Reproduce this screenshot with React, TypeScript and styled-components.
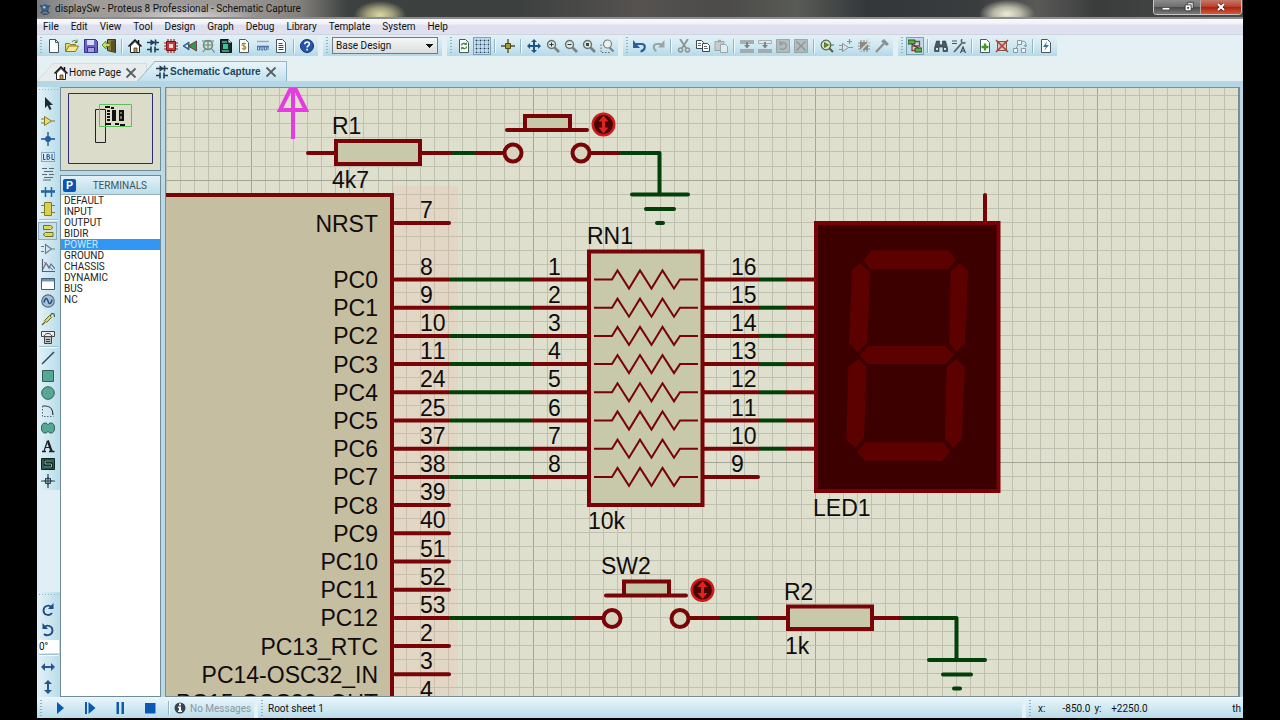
import React, { ReactNode } from 'react';
import styled, { createGlobalStyle, css } from 'styled-components';

const Global = createGlobalStyle`
  * { box-sizing: border-box; }
  body { margin: 0; background: #000; font-family: Roboto, "Liberation Sans", sans-serif; font-size: 10px; color: #111; }
  button, input, select { font: inherit; color: inherit; margin: 0; padding: 0; border: 0; background: none; }
  ul { margin: 0; padding: 0; list-style: none; }
`;

/* ---------- window frame ---------- */

const Desktop = styled.div`
  display: flex;
  flex-direction: column;
  height: 100vh;
  padding: 0 37px 2px;
  background: #000;
`;

const AppWindow = styled.div`
  flex: 1;
  min-height: 0;
  display: flex;
  flex-direction: column;
  background: #e4f0f3;
`;

const TitleBar = styled.header`
  flex: none;
  height: 19px;
  display: flex;
  align-items: center;
  gap: 4px;
  padding-left: 2px;
  border-bottom: 2px solid #8b8d8d;
  background:
    radial-gradient(ellipse 26px 14px at 343px 15px, #dcd9a4 0%, rgba(200, 198, 150, 0.7) 50%, transparent 100%),
    radial-gradient(ellipse 28px 14px at 970px 14px, #eeecd8 0%, rgba(210, 208, 190, 0.8) 50%, transparent 100%),
    radial-gradient(ellipse 70px 14px at 150px 18px, rgba(225, 222, 225, 0.9), transparent 100%),
    linear-gradient(90deg, #777c80 0, #a09d9a 40px, #9b9896 200px, #85827e 262px, #3d4140 310px, #3c403f 480px, #555250 600px, #4c4b4a 690px, #595b56 760px, #33373a 830px, #3a3d3e 940px, #5a5a58 1000px, #3a3c3c 1060px, #4a4a4a 100%);
`;

const TitleText = styled.h1`
  flex: 1;
  margin: 0;
  font-size: 10px;
  font-weight: 400;
  line-height: 16px;
  white-space: nowrap;
`;

const WindowControls = styled.div`
  display: flex;
  align-self: flex-start;
  width: 89px;
  height: 15px;
  margin-right: 1px;
  border: 1px solid #c5c5c5;
  border-top: 0;
  border-radius: 0 0 4px 4px;
  overflow: hidden;
`;

const ControlButton = styled.button<{ $close?: boolean }>`
  flex: ${p => (p.$close ? 41 : 24)};
  display: flex;
  align-items: center;
  justify-content: center;
  border-left: ${p => (p.$close ? 1 : 0)}px solid #b9aaaa;
  background: ${p =>
    p.$close
      ? 'linear-gradient(#c4796b 0, #b8422c 48%, #a92310 52%, #d9583a 100%)'
      : 'linear-gradient(#8c8c8c 0, #6f6f6f 48%, #4a4a4a 52%, #7c7a7a 100%)'};
`;

const MenuBar = styled.nav`
  flex: none;
  display: flex;
  height: 16px;
  border-bottom: 1px solid #cfd3df;
  background: linear-gradient(#fbfbfd 0, #f1f1f8 30%, #dddfee 45%, #dfe1ef 100%);
`;

const MenuItem = styled.button`
  padding: 0 6px;
  line-height: 15px;
  font-size: 10px;
`;

/* ---------- toolbars ---------- */

const Toolbars = styled.div`
  flex: none;
  display: flex;
  gap: 5px;
  height: 21px;
`;

const barBlue = 'linear-gradient(#e2f1f6 0, #cfe7f0 55%, #b4d9e8 100%)';

const ToolGroup = styled.div<{ $width: number }>`
  width: ${p => p.$width}px;
  display: flex;
  align-items: center;
  padding-right: 2px;
  background: ${barBlue};
`;

const Grip = styled.span<{ $across?: boolean }>`
  flex: none;
  ${p =>
    p.$across
      ? css`
          height: 3px;
          margin: 2px 2px 3px;
          background: repeating-linear-gradient(90deg, #8fb3c4 0 1px, transparent 1px 3px);
          background-size: 100% 1px;
          background-repeat: repeat-x;
        `
      : css`
          width: 2px;
          height: 17px;
          margin: 0 3px;
          background: repeating-linear-gradient(#8fb3c4 0 1px, transparent 1px 3px);
        `}
`;

const Divider = styled.span`
  flex: none;
  width: 2px;
  height: 14px;
  margin: 0 3px;
  background: linear-gradient(90deg, #94b6c4 50%, #f3fafc 50%);
`;

const ToolButton = styled.button<{ $active?: boolean; $muted?: boolean }>`
  flex: 1;
  min-width: 0;
  height: 18px;
  display: flex;
  align-items: center;
  justify-content: center;
  opacity: ${p => (p.$muted ? 0.75 : 1)};
  ${p => p.$active && 'background: #c0dcea; box-shadow: inset 0 0 0 1px #7ba3b8;'}
`;

const DesignSelect = styled.select`
  flex: 1;
  height: 17px;
  margin: 0 2px 0 1px;
  padding: 0 3px;
  border: 1px solid #737b80;
  appearance: none;
  background:
    linear-gradient(#111, #111) no-repeat right 4px top 6px / 7px 1px,
    linear-gradient(#111, #111) no-repeat right 5px top 7px / 5px 1px,
    linear-gradient(#111, #111) no-repeat right 6px top 8px / 3px 1px,
    linear-gradient(#111, #111) no-repeat right 7px top 9px / 1px 1px,
    linear-gradient(#f5f5f5, #dcdedf);
  font-size: 10px;
`;

/* ---------- document tabs ---------- */

const TabStrip = styled.div`
  flex: none;
  display: flex;
  align-items: flex-end;
  height: 31px;
  padding-left: 17px;
  border-bottom: 6px solid #b4d7e6;
  background: linear-gradient(#e4f0f3, #e6eef0);
`;

const Tab = styled.div<{ $active?: boolean }>`
  position: relative;
  z-index: 0;
  display: flex;
  align-items: center;
  gap: 1px;
  height: ${p => (p.$active ? 20 : 18)}px;
  padding-right: 8px;
  margin-left: ${p => (p.$active ? 8 : 0)}px;
  border: 1px solid ${p => (p.$active ? '#8fb5c6' : '#d5dcdf')};
  border-width: 1px 1px 0 0;
  background: ${p => (p.$active ? 'linear-gradient(#e8f5fa, #c3e1ed)' : '#e9ecec')};
  color: ${p => (p.$active ? '#1b4662' : '#111')};
  font-family: ${p => (p.$active ? '"Liberation Sans", Arial, sans-serif' : 'inherit')};
  font-weight: ${p => (p.$active ? 700 : 400)};

  &::before {
    content: '';
    position: absolute;
    z-index: -1;
    top: -1px;
    bottom: 0;
    left: -9px;
    width: 18px;
    border: 1px solid ${p => (p.$active ? '#8fb5c6' : '#d5dcdf')};
    border-width: 1px 0 0 1px;
    background: ${p => (p.$active ? 'linear-gradient(#e8f5fa, #c3e1ed)' : '#e9ecec')};
    transform: skewX(-42deg);
  }
`;

const TabLabel = styled.button`
  display: flex;
  align-items: center;
  gap: 1px;
  font-family: inherit;
  font-weight: inherit;
  white-space: nowrap;
`;

const TabClose = styled.button`
  display: flex;
  margin-left: 2px;
`;

/* ---------- work area ---------- */

const WorkArea = styled.main`
  flex: 1;
  min-height: 0;
  display: flex;
  padding-right: 3px;
  background: #b9d9e6;
`;

const ModeRail = styled.aside`
  flex: none;
  width: 23px;
  display: flex;
  flex-direction: column;
  justify-content: space-between;
  background: #dfeff5;
`;

const RailGroup = styled.div<{ $height: number }>`
  height: ${p => p.$height}px;
  display: flex;
  flex-direction: column;
  background: linear-gradient(90deg, #e4f2f8, #b9dcea);
`;

const RailButton = styled.button<{ $active?: boolean }>`
  flex: 1;
  min-height: 0;
  width: 19px;
  margin-left: 1px;
  display: flex;
  align-items: center;
  justify-content: center;
  ${p => p.$active && 'background: #c6dfe9; box-shadow: inset 0 0 0 1px #8babba;'}
`;

const RailDivider = styled.span`
  flex: none;
  height: 2px;
  margin: 1px 2px;
  background: linear-gradient(#9dbfcd 50%, #f3fafc 50%);
`;

const AngleInput = styled.input`
  flex: none;
  width: 20px;
  height: 13px;
  margin-left: 2px;
  background: #fff;
  font-size: 10px;
`;

const SidePanels = styled.section`
  flex: none;
  width: 101px;
  display: flex;
  flex-direction: column;
  gap: 4px;
`;

const Overview = styled.div`
  flex: none;
  height: 84px;
  padding: 5px 7px;
  border: 1px solid #6f8b98;
  background: #dcdccb;
`;

const Picker = styled.div`
  flex: 1;
  min-height: 0;
  display: flex;
  flex-direction: column;
  border: 1px solid #6f8b98;
  background: #fff;
`;

const PickerHeader = styled.div`
  flex: none;
  display: flex;
  align-items: center;
  justify-content: space-between;
  height: 19px;
  padding: 0 13px 0 2px;
  border-bottom: 1px solid #8fb0be;
  background: linear-gradient(#e3f2f8, #bcdce9);
  color: #3d5563;
`;

const PickButton = styled.button`
  width: 13px;
  height: 13px;
  border-radius: 2px;
  background: #0a55b4;
  color: #fff;
  font-size: 11px;
  font-weight: 700;
  line-height: 13px;
`;

const PickerRow = styled.button<{ $selected?: boolean }>`
  display: block;
  width: 100%;
  height: 11px;
  padding: 0 3px;
  line-height: 11px;
  text-align: left;
  background: ${p => (p.$selected ? '#3297f4' : 'transparent')};
  color: ${p => (p.$selected ? '#cfe6ff' : '#222')};
`;

const CanvasFrame = styled.section`
  flex: 1;
  min-width: 0;
  margin-left: 4px;
  border: 1px solid #7b8f93;
  border-width: 1px 2px 1px 1px;
  background: #dedfcd;
  overflow: hidden;
`;

const Sheet = styled.svg`
  display: block;
  width: 100%;
  height: 100%;
  font-family: "Liberation Sans", Arial, sans-serif;
  font-size: 23px;
  font-kerning: none;
  fill: none;
`;

/* ---------- status bar ---------- */

const StatusBar = styled.footer`
  flex: none;
  display: flex;
  height: 21px;
  gap: 4px;
  border-top: 1px solid #eef6f9;
  background: #e4f2f7;
`;

const StatusGroup = styled.div<{ $width?: number }>`
  ${p => (p.$width ? `width: ${p.$width}px;` : 'flex: 1;')}
  display: flex;
  align-items: center;
  background: linear-gradient(#e8f5fa, #b9dcea);
  white-space: nowrap;
`;

const SimButton = styled.button`
  width: 30px;
  height: 18px;
  display: flex;
  align-items: center;
  justify-content: center;
`;

const Muted = styled.span`
  margin-left: 3px;
  color: #8b989f;
`;

const SheetName = styled.span`
  margin-left: 2px;
`;

const Coord = styled.span<{ $width: number }>`
  width: ${p => p.$width}px;
  text-align: right;
`;

const CoordName = styled.span`
  margin-left: 4px;
`;

const Units = styled.span`
  flex: 1;
  padding-right: 2px;
  text-align: right;
`;

/* ---------- icons, drawn on a 14 unit square ---------- */

const line = (d: string, stroke = '#333', width = 1, fill = 'none') => (
  <path d={d} stroke={stroke} strokeWidth={width} fill={fill} />
);

const pageOutline = line('M2.5 .5h6l3 3v10h-9z', '#4a5560', 1, '#fff');
const lens = (
  <>
    <path d="M8.500 8.500l4.500 4.500" stroke="#7c8284" strokeWidth="2.600" />
    <circle cx="5.500" cy="5.500" r="4" stroke="#6a7274" strokeWidth="1.400" fill="#dfe9dd" />
  </>
);
const greyTile = <path d="M.5 .5h13v13h-13z" fill="#a9adad" stroke="#8a8f90" />;
const arrows4 = 'M7 0l3 3H8v3h3V4l3 3-3 3V8H8v3h2l-3 3-3-3h2V8H3v2L0 7l3-3v2h3V3H4z';

const icons: Record<string, ReactNode> = {
  app: (
    <>
      <circle cx="7" cy="6" r="4.500" fill="#3c5f88" />
      <path d="M1 3l3 2M13 3l-3 2M2 12l3-3M12 12l-3-3M4 13h6" stroke="#29415e" strokeWidth="1.500" />
      <circle cx="6" cy="5" r="1.500" fill="#9fc0de" />
    </>
  ),
  newFile: <>{pageOutline}{line('M8.5 .5v3h3', '#4a5560')}</>,
  open: (
    <>
      <path d="M.5 12.500V4.500h4l1 1h5v2" fill="#e9d566" stroke="#8a7a22" />
      <path d="M.8 12.500l3-5.500h9.700l-3 5.500z" fill="#f7e98c" stroke="#8a7a22" />
      {line('M7 3c1-2 3.500-2 4.500 0M12 .5v3H9.500', '#4c7d2c')}
    </>
  ),
  save: (
    <>
      <path d="M.5 .5h11l2 2v11H.5z" fill="#6a64c0" stroke="#37338a" />
      <path d="M3 1h7v5H3z" fill="#d8dcf6" />
      <path d="M3.500 8.500h7v5h-7z" fill="#a5a3dc" stroke="#37338a" />
    </>
  ),
  exit: (
    <>
      <path d="M5.500 .5h8v13l-8-2z" fill="#8d7b42" stroke="#3e3716" />
      <path d="M9 2l4-1v12l-4-1z" fill="#5e4f24" />
      <path d="M0 6l4-4v2.500h4v3H4V10z" fill="#c8e04d" stroke="#55701c" strokeWidth=".8" />
    </>
  ),
  home: (
    <>
      <path d="M2.500 7v6.500h9V7L7 2.500z" fill="#fff" stroke="#222" />
      <path d="M.5 7.500L7 1l6.500 6.500" stroke="#111" strokeWidth="1.500" fill="none" />
      <path d="M10.500 4V1" stroke="#111" strokeWidth="1.500" />
      <path d="M6 9h3v4.500H6z" fill="#c79a3a" stroke="#222" strokeWidth=".7" />
    </>
  ),
  schematic: (
    <>
      {line('M1 3.500h12M9.500 .5v6M1 10.500h4M9 10.500h4M5 7.500v6M9 7.500v6', '#1d3f5c', 1.600)}
      <path d="M4.500 .3v6.400l4.500-3.200z" fill="#1d3f5c" />
    </>
  ),
  chip: (
    <>
      {line('M4 0v14M7 0v14M10 0v14M0 4h14M0 7h14M0 10h14', '#8d2a2a', 1.200)}
      <path d="M2.500 2.500h9v9h-9z" fill="#c43a36" stroke="#7a1010" />
      <path d="M5 5h4v4H5z" fill="#f6dcd6" />
    </>
  ),
  viewer3d: (
    <>
      <path d="M0 7l6-4v8z" fill="#3a7bb5" stroke="#1e4a75" strokeWidth=".8" />
      <path d="M5 7l8.500-5v10z" fill="#2f9a4e" stroke="#7c2323" strokeWidth=".8" />
      <path d="M2 7l3-1.500v3z" fill="#fff" />
    </>
  ),
  gerber: (
    <>
      <circle cx="7" cy="6" r="4.500" stroke="#6f8880" strokeWidth="1.600" fill="#cfe3d8" />
      {line('M1 2h12M2 13l3-4M10 9l3.500 4.500M7 2v8M3 6h8', '#6f8880', 1.200)}
    </>
  ),
  bom: (
    <>
      <path d="M1.500 .5h8l3 3v10h-11z" fill="#14302c" stroke="#0b1918" />
      <path d="M4 5h5v5H4z" fill="#39c596" />
      {line('M3 3h5M3 12h7', '#9fe6cf')}
      <path d="M9.500 .5v3h3z" fill="#fff" />
    </>
  ),
  money: (
    <>
      {pageOutline}
      {line('M9 5c-1-1.200-4-1-4 .5S9 7 9 8.800 5.800 10.500 5 9.300M7 3.500v8', '#a18721', 1.100)}
    </>
  ),
  ruler: (
    <>
      {line('M1 2.500h12', '#9aa9b8', 1.400)}
      {line('M1 7.500h12', '#5573ae', 1.600)}
      {line('M1.500 8v3h2V8M5 8v3h2V8M8.500 8v3h2V8M12 8v3', '#5573ae')}
    </>
  ),
  notes: <>{pageOutline}{line('M4.500 4.500h4M4.500 6.500h5M4.500 8.500h5M4.500 10.500h5', '#444')}</>,
  help: (
    <>
      <circle cx="7" cy="7" r="6.500" fill="#2455ab" stroke="#12336f" />
      {line('M4.800 5.200c0-3 4.600-2.800 4.600-.2 0 1.600-2.300 1.700-2.300 3.600M7.100 9.800v1.700', '#fff', 1.600)}
    </>
  ),
  refresh: (
    <>
      {pageOutline}
      {line('M4.500 6.500c0-2 3-3 4.500-1M9.500 7.500c0 2.200-3 3-4.500 1', '#3f8f2c', 1.300)}
      <path d="M9.800 3v3H7zM4.200 11V8H7z" fill="#3f8f2c" />
    </>
  ),
  grid: (
    <>
      {line('M0 1.500h14M0 5.500h14M0 9.500h14M0 13.500h14', '#8ea9bd', 1)}
      {line('M1.500 0v14M5.500 0v14M9.500 0v14M13.500 0v14', '#8ea9bd', 1)}
      <path
        d="M1 1.500h13M1 5.500h13M1 9.500h13M1 13.500h13"
        stroke="#1f3a54"
        strokeDasharray="1 3"
      />
    </>
  ),
  origin: (
    <>
      {line('M7 0v14M0 7h14', '#54502a', 1.400)}
      <path d="M4.500 4.500h5v5h-5z" fill="#a39a32" stroke="#4c4713" />
    </>
  ),
  pan: <path d={arrows4} fill="#1f5489" />,
  zoomIn: <>{lens}{line('M5.500 3.500v4M3.500 5.500h4', '#333')}</>,
  zoomOut: <>{lens}{line('M3.500 5.500h4', '#333')}</>,
  zoomAll: <>{lens}<path d="M4 4h3v3H4z" fill="#444" /></>,
  zoomArea: (
    <>
      <path d="M1 5.500v8h9" stroke="#666" strokeDasharray="1.500 1.500" />
      <path d="M9.500 8.500l4 4" stroke="#7c8284" strokeWidth="2.200" />
      <circle cx="7.500" cy="5" r="4" stroke="#7b8284" strokeWidth="1.200" fill="#eef2ee" />
    </>
  ),
  undo: (
    <>
      {line('M3 5h5.500c5 0 4 6.500-1 7.500', '#2d5f98', 2.200)}
      <path d="M0 1v8h7z" fill="#2d5f98" />
    </>
  ),
  redo: (
    <>
      {line('M10 5H6c-4.500 0-4 5.500-.5 7', '#9aa4aa', 2)}
      <path d="M13.500 1v7.500H7z" fill="#9aa4aa" />
    </>
  ),
  cut: (
    <>
      {line('M3 0l6 9M11 0L5 9', '#8c9396', 1.800)}
      <circle cx="3.500" cy="11" r="2" stroke="#8c9396" strokeWidth="1.500" />
      <circle cx="10.500" cy="11" r="2" stroke="#8c9396" strokeWidth="1.500" />
    </>
  ),
  copy: (
    <>
      <path d="M.5 1.500h5l2 2v6h-7z" fill="#fff" stroke="#3c464e" />
      <path d="M6.500 4.500h5l2 2v6h-7z" fill="#fff" stroke="#3c464e" />
      {line('M2 4.500h3M2 6.500h3M8 7.500h3M8 9.500h4', '#5d6870')}
    </>
  ),
  paste: (
    <>
      <path d="M1 2.500h9v9H1z" fill="#c0c4c4" stroke="#8b9295" />
      <path d="M4 .8h3v2.500H4z" fill="#8b9295" />
      <path d="M6.500 5.500h5l2 2v6h-7z" fill="#eee" stroke="#8b9295" />
    </>
  ),
  blockCopy: (
    <>
      <path d="M0 1h14v4H0zM0 10h14v4H0z" fill="#979c9d" />
      <path d="M7 9.500L4 6h2V3h2v3h2z" fill="#5f6567" />
    </>
  ),
  blockMove: (
    <>
      <path d="M.5 1.500h13v3H.5z" fill="#e3e8e9" stroke="#979c9d" />
      <path d="M0 10h14v4H0z" fill="#979c9d" />
      <path d="M7 9.500L4 6h2V3h2v3h2z" fill="#5f6567" />
    </>
  ),
  blockRotate: <>{greyTile}{line('M4 5c3-3 7-1 6 3-1 3-5 3-6 1M4 2v3.500h3', '#7d8283', 1.400)}</>,
  blockDelete: <>{greyTile}{line('M2.500 2.500l9 9M11.500 2.500l-9 9', '#74797a', 1.300)}</>,
  pick: (
    <>
      <path d="M9 9l4 4" stroke="#5b5f50" strokeWidth="2.200" />
      <circle cx="6" cy="6" r="4.800" stroke="#566057" strokeWidth="1.200" fill="#dde6b2" />
      <path d="M4.500 3.500v5l4-2.500z" fill="#5f9330" stroke="#3f5a22" strokeWidth=".7" />
      {line('M9.500 6H14', '#3f7d2c')}
    </>
  ),
  makeDevice: (
    <>
      <path d="M3.500 4.500l6 4-6 4z" fill="#dde2e3" stroke="#8b9295" />
      {line('M0 6.500h3.500M0 10.500h3.500M9.500 8.500H14M10.500 0v5M8 2.500h5', '#8b9295', 1.200)}
    </>
  ),
  packaging: (
    <>
      {line('M4 1v12M7 1v12M10 1v12M1 4h12M1 7h12M1 10h12', '#8f8f8a', 1.200)}
      <path d="M3 3h8v8H3z" fill="#8c8983" />
      {line('M3 12l9-9M11 0c-1.500 2 0 4 3 3', '#d8d8d2', 1.700)}
    </>
  ),
  decompose: (
    <>
      {line('M1 13l8-8.500', '#8a8f90', 2.200)}
      <path d="M6 2.500L9 0l5 5-2.500 2-2-2z" fill="#8a8f90" />
    </>
  ),
  wire: (
    <>
      <path d="M0 1h7v4H0zM7 9h7v4H7z" fill="#5fae45" stroke="#24521a" />
      {line('M7 2.500h4.500v4.500H4v4.500h3', '#a03b30', 1.300)}
      {line('M3.500 5l7 4', '#27324a')}
    </>
  ),
  search: (
    <>
      <path d="M2.500 2h3v3l1 1h1l1-1V2h3l2 7v3.500H9V8H5v4.500H.5V9z" fill="#4c5963" stroke="#29333b" strokeWidth=".6" />
      <path d="M2 9h2v2H2zM10 9h2v2h-2z" fill="#d8e3ea" />
    </>
  ),
  property: (
    <>
      {line('M0 2h5M0 4.500h5', '#4b565e', 1.200)}
      {line('M2 13l8-9', '#56636c', 1.800)}
      {line('M10 0c-1.500 2.500 0 5 3.500 3.500', '#56636c', 1.500)}
      {line('M8.500 14L11 8l2.500 6M9.500 12h3', '#39444c', 1.100)}
    </>
  ),
  newSheet: <>{pageOutline}{line('M7 4.500v7M3.500 8h7', '#3f9b26', 2.400)}</>,
  removeSheet: (
    <>
      <path d="M2.500 2.500h9v9h-9z" fill="#d9c6bd" stroke="#7a5a50" />
      {line('M1 1l12 12M13 1L1 13', '#b2402f', 1.600)}
    </>
  ),
  goto: (
    <>
      {line('M4.500 1.500h4v4h-4zM.5 9.500h4v4h-4zM8.500 9.500h4v4h-4z', '#8b979d', 1, '#eef3f5')}
      {line('M8.500 2.500c4-1 5 1 4 5M5 5.500l-2 4M11 6l1.500 2L14 6', '#8b979d')}
    </>
  ),
  erc: <>{pageOutline}<path d="M8 2.500L4 8h3l-2 4 5-6H7z" fill="#2d76a8" /></>,

  select: <path d="M4 0v11l2.500-2.500L8.500 13l2-1-2-4H12z" fill="#1e2a33" />,
  component: (
    <>
      <path d="M3.500 2.500l7 4.500-7 4.500z" fill="#e8df6c" stroke="#857a25" />
      {line('M0 5h3.500M0 9h3.500M10.500 7H14', '#857a25')}
    </>
  ),
  junction: (
    <>
      {line('M7 0v14M0 7h14', '#1f4e80', 1.300)}
      <circle cx="7" cy="7" r="3" fill="#1f5fa2" />
    </>
  ),
  label: (
    <>
      <path d="M.5 2.500h13v9H.5z" stroke="#33699a" strokeDasharray="1 1" fill="#d6e8f2" />
      {line('M2.500 4v5.500h2M6 4.500h1.500c1.200 0 1.200 2 0 2H6zM6 6.500h1.800c1.200 0 1.200 2.800 0 2.800H6zM11 4v5.500h2', '#1f4e80')}
    </>
  ),
  script: line('M1 1.500h5M8 1.500h5M3 4.500h9M1 7.500h5M8 7.500h5M3 10.500h9M2 13h8', '#5a6a74', 1.100),
  bus: (
    <>
      {line('M0 6.500h14', '#2267a3', 2.600)}
      {line('M4.500 2v5M10.500 7v5M4.500 7v5M10.500 2v5', '#2267a3', 1.500)}
    </>
  ),
  subcircuit: (
    <>
      {line('M0 3.500h14M0 10.500h14', '#857a25', 1.200)}
      <path d="M3.500 .5h7v13h-7z" fill="#d9cf51" stroke="#857a25" />
    </>
  ),
  terminal: (
    <>
      <path d="M2.500 1.500h7l2.500 2-2.500 2h-7z" fill="#d9d95c" stroke="#6e7324" />
      <path d="M4.500 8.500h7.500v4H4.500l-2.500-2z" fill="#d9d95c" stroke="#6e7324" />
    </>
  ),
  pin: <>{line('M4.500 2.500l6 4.500-6 4.500zM0 4.500h3M0 9.500h3M10.500 7H14', '#687b86', 1.100)}</>,
  graph: (
    <>
      {line('M1.500 0v12.500H14', '#56636c', 1.200)}
      {line('M2 10l3-6 3 5 2-4 4 5', '#4f6f9a', 1.100)}
      {line('M3 3l9 8', '#9a6a6a')}
    </>
  ),
  tape: (
    <>
      <path d="M.5 1.500h13v11H.5z" fill="#fff" stroke="#435d78" />
      <path d="M1 2h12v2.500H1z" fill="#7790b3" />
    </>
  ),
  generator: (
    <>
      <circle cx="7" cy="7" r="6.200" fill="#a9bfd0" stroke="#52708b" strokeWidth="1.200" />
      {line('M3 8.500c1-5 3-5 4-1.500s3 3.500 4-1.500', '#24517f', 1.500)}
    </>
  ),
  probe: (
    <>
      {line('M1 13l3-3M9 4l2-2.500 2 .5.5 3', '#555b35', 1.200)}
      <path d="M3.500 8.500l5-5 2 2-5 5z" fill="#dbd263" stroke="#6e6a2c" />
    </>
  ),
  instrument: (
    <>
      <path d="M.5 1.500h13v5H.5z" fill="#eee" stroke="#444" />
      {line('M3 6c2-3.500 6-3.500 8 0', '#444')}
      <path d="M3.500 6.500h7v7h-7z" fill="#b7bdb8" stroke="#444" />
      {line('M5 9.500h4M5 11.500h4', '#444')}
    </>
  ),
  line2d: line('M1 13L13 1', '#27475c', 1.500),
  box2d: <path d="M1.500 1.500h11v11h-11z" fill="#56a793" stroke="#2f5f5c" />,
  circle2d: <circle cx="7" cy="7" r="6.300" fill="#56a793" stroke="#2f5f5c" />,
  arc2d: (
    <>
      {line('M1.500 2h3c5 0 7.500 4 7.500 9', '#333', 1.200)}
      <path d="M1.500 2v10.500h11" stroke="#4c6a7b" strokeDasharray="1.500 1.500" />
    </>
  ),
  path2d: (
    <path
      d="M4 2c2 0 2.500 1 3 1.800C7.500 3 8 2 10 2c2.500 0 3.500 2 3.500 5S12.500 12 10 12c-2 0-2.500-1-3-1.800C6.500 11 6 12 4 12 1.500 12 .5 10 .5 7S1.500 2 4 2z"
      fill="#56a793"
      stroke="#2f5f5c"
    />
  ),
  text2d: (
    <>
      {line('M1 12.500h4M8 12.500h5.500', '#1d2227', 1.300)}
      {line('M3 12L6.500 2M4.300 8.500h5', '#1d2227', 1.200)}
      {line('M6.700 1.500l4 11', '#1d2227', 2.300)}
    </>
  ),
  symbol2d: (
    <>
      <path d="M.5 1.500h13v11H.5z" fill="#2a5f55" stroke="#12211f" />
      {line('M11 4H4v3h6.500v3H3', '#07110f', 2.400)}
      {line('M11 4H4v3h6.500v3H3', '#7fc0b0', 1)}
    </>
  ),
  marker2d: (
    <>
      {line('M7 0v14M0 7h14', '#2d4450', 1.200)}
      <path d="M4.500 4.500h5v5h-5z" stroke="#2d4450" fill="#8fb9bd" />
      {line('M7 3v8M3 7h8', '#2d4450')}
    </>
  ),
  rotateCw: (
    <>
      {line('M10.500 4.500C8 1 2.500 3 2.500 7.500S8.500 13.500 11 10', '#1e4a85', 1.800)}
      <path d="M12.500 0v6H7z" fill="#1e4a85" />
    </>
  ),
  rotateCcw: (
    <>
      {line('M3.500 4.500C6 1 11.500 3 11.500 7.500S5.500 13.500 3 11', '#1e4a85', 1.800)}
      <path d="M1.500 0v6H7z" fill="#1e4a85" />
    </>
  ),
  mirrorX: <path d="M0 7l4-4v3h6V3l4 4-4 4V8H4v3z" fill="#2a548f" />,
  mirrorY: <path d="M7 0l4 4H8v6h3l-4 4-4-4h3V4H3z" fill="#2a548f" />,

  play: <path d="M4 1l7 6-7 6z" fill="#0d58b4" />,
  step: <path d="M2 1h2v12H2zM5.500 1l7 6-7 6z" fill="#0d58b4" />,
  pause: <path d="M3.500 1H6v12H3.500zM8.500 1H11v12H8.500z" fill="#0d58b4" />,
  stop: <path d="M2 2h10.500v10.500H2z" fill="#0d58b4" />,
  info: (
    <>
      <circle cx="7" cy="7" r="5.500" fill="#36454f" />
      <path d="M6 2.500h2v2H6zM5 5.500h3v4h1v1.500H5V9.500h1V7H5z" fill="#fff" />
    </>
  ),
  close: line('M2.500 2.500l9 9M11.500 2.500l-9 9', '#5a5f62', 1.800),
  minimise: <path d="M2.500 7.500h9v3h-9z" fill="#fff" stroke="#444" />,
  restore: (
    <>
      <path d="M5 1.500h7v7H5z" fill="#ddd" stroke="#333" />
      <path d="M2.500 4.500h7v7h-7z" fill="#fff" stroke="#333" />
      <path d="M5 7h2v2H5z" fill="#333" />
    </>
  ),
  closeWindow: (
    <>
      {line('M3.500 3.500l7 7M10.500 3.500l-7 7', '#5b1a12', 4)}
      {line('M3.500 3.500l7 7M10.500 3.500l-7 7', '#fff', 2.400)}
    </>
  ),
};

const Glyph = ({ name, size = 14 }: { name: string; size?: number }) => (
  <svg width={size} height={size} viewBox="0 0 14 14" fill="none" aria-hidden="true">
    {icons[name]}
  </svg>
);

/* ---------- toolbar data ---------- */

const SEP = '|';
const fileTools = ['newFile', 'open', 'save', 'exit', SEP, 'home', 'schematic', 'chip', 'viewer3d', 'gerber', 'bom', 'money', 'ruler', 'notes', SEP, 'help'];
const viewTools = ['refresh', 'grid', SEP, 'origin', SEP, 'pan', 'zoomIn', 'zoomOut', 'zoomAll', 'zoomArea'];
const editTools = ['undo', 'redo', SEP, 'cut', 'copy', 'paste', SEP, 'blockCopy', 'blockMove', 'blockRotate', 'blockDelete', SEP, 'pick', 'makeDevice', 'packaging', 'decompose'];
const designTools = ['wire', SEP, 'search', 'property', SEP, 'newSheet', 'removeSheet', 'goto', SEP, 'erc'];
const modes = ['select', 'component', 'junction', 'label', 'script', 'bus', 'subcircuit', SEP, 'terminal', 'pin', 'graph', 'tape', 'generator', 'probe', 'instrument', SEP, 'line2d', 'box2d', 'circle2d', 'arc2d', 'path2d', 'text2d', 'symbol2d', 'marker2d'];
const active = ['grid', 'wire', 'terminal'];
const muted = ['blockCopy', 'blockMove', 'blockRotate', 'blockDelete', 'paste'];

const Tools = ({ names, width }: { names: string[]; width: number }) => (
  <ToolGroup $width={width}>
    <Grip />
    {names.map((n, i) =>
      n === SEP ? (
        <Divider key={i} />
      ) : (
        <ToolButton key={i} aria-label={n} $active={active.includes(n)} $muted={muted.includes(n)}>
          <Glyph name={n} />
        </ToolButton>
      ),
    )}
  </ToolGroup>
);

const menus = ['File', 'Edit', 'View', 'Tool', 'Design', 'Graph', 'Debug', 'Library', 'Template', 'System', 'Help'];
const terminals = ['DEFAULT', 'INPUT', 'OUTPUT', 'BIDIR', 'POWER', 'GROUND', 'CHASSIS', 'DYNAMIC', 'BUS', 'NC'];

/* ---------- schematic ---------- */

const RED = '#780408';
const GREEN = '#033f08';
const BODY = '#c8c8aa';
const INK = '#100c0c';
const ROW = 28.2;
const rowY = (i: number) => 279.5 + ROW * i;

const Wire = ({ d, green }: { d: string; green?: boolean }) => (
  <path d={d} stroke={green ? GREEN : RED} strokeWidth="4" strokeLinejoin="round" />
);

const Pin = ({ d }: { d: string }) => <path d={d} stroke={RED} strokeWidth="4" strokeLinecap="round" />;

const Label = ({ x, y, end, children }: { x: number; y: number; end?: boolean; children: ReactNode }) => (
  <text x={x} y={Math.round(y)} fill={INK} textAnchor={end ? 'end' : 'start'}>
    {children}
  </text>
);

const GridLines = () => {
  const step = 14.1;
  const cols = Array.from({ length: 180 }, (_, i) => i);
  return (
    <g shapeRendering="crispEdges">
      {cols.map(i => (
        <path
          key={`v${i}`}
          d={`M${Math.round(166 + i * step) + 0.5} 0V2000`}
          stroke={i % 20 === 6 ? '#a3a697' : '#bfc0b0'}
        />
      ))}
      {cols.map(i => (
        <path
          key={`h${i}`}
          d={`M0 ${Math.round(95 + i * step) + 0.5}H3000`}
          stroke={i % 20 === 6 ? '#a3a697' : '#bfc0b0'}
        />
      ))}
    </g>
  );
};

const Switch = ({ x, y }: { x: number; y: number }) => (
  <g transform={`translate(${x} ${y})`}>
    <path d="M12-24V-37H57V-24" stroke={RED} strokeWidth="4" fill={BODY} />
    <path d="M-6-23H74" stroke={RED} strokeWidth="4" strokeLinecap="round" />
    <circle cx="0" cy="0" r="8.500" stroke={RED} strokeWidth="4" fill="#d6d5bf" />
    <circle cx="68" cy="0" r="8.500" stroke={RED} strokeWidth="4" fill="#d6d5bf" />
    <circle cx="90.500" cy="-28.500" r="10.700" stroke="#d01a18" strokeWidth="2.500" fill="#4a0202" />
    <path d="M90.500-37.500l5 6h-3.500v6h3.500l-5 6-5-6h3.500v-6h-3.500z" fill="#e0221c" />
  </g>
);

const Ground = ({ x, y }: { x: number; y: number }) => (
  <path
    d={`M${x - 28} ${y}h56M${x - 14} ${y + 14.5}h28M${x - 3} ${y + 28.5}h6`}
    stroke={GREEN}
    strokeWidth="4"
    strokeLinecap="round"
  />
);

const leftPins = ['8', '9', '10', '11', '24', '25', '37', '38', '39', '40', '51', '52', '53', '2', '3', '4'];
const portName = (i: number) =>
  i < 13 ? `PC${i}` : ['PC13_RTC', 'PC14-OSC32_IN', 'PC15-OSC32_OUT'][i - 13];

const segments = [
  'M252 240L275 211H505L527 240 505 268H270z',
  'M240 250L270 275 262 490 232 515 207 490 216 270z',
  'M540 250L564 272 555 490 530 515 508 490 512 275z',
  'M240 525L265 498H495L522 525 497 552H262z',
  'M235 538L260 560 252 775 225 803 199 778 205 560z',
  'M530 538L554 562 546 775 520 803 495 778 500 560z',
  'M232 815L255 787H487L512 812 487 843H255z',
];

const Schematic = () => (
  <Sheet role="img" aria-label="Schematic">
    <g transform="translate(-166 -88)">
      <GridLines />
      <path d="M393 186h65v900h-65z" fill="#f0b8a4" fillOpacity=".22" />
      <path d="M150 195H392V1100H150z" fill="#c6bea0" stroke={RED} strokeWidth="4" />

      <path d="M293 86V139M293 84L280 110H306z" stroke="#e43cdf" strokeWidth="4" />

      <Label x={378} y={232} end>NRST</Label>
      <Label x={420} y={218}>7</Label>
      <Pin d="M395 223H449" />
      {leftPins.map((n, i) => (
        <g key={n}>
          <Label x={378} y={288 + ROW * i} end>{portName(i)}</Label>
          <Label x={420} y={274.500 + ROW * i}>{n}</Label>
          <Pin d={`M395 ${rowY(i)}H449`} />
        </g>
      ))}

      {leftPins.slice(0, 8).map((n, i) => (
        <g key={n}>
          <Wire d={`M532 ${rowY(i)}H588`} />
          <Wire green d={`M450 ${rowY(i)}H532`} />
          <Label x={548} y={274.500 + ROW * i}>{i + 1}</Label>
          <Label x={731} y={274.500 + ROW * i}>{16 - i}</Label>
          <Pin d={`M704 ${rowY(i)}H758`} />
          {i < 7 && <Wire green d={`M759 ${rowY(i)}H786`} />}
          {i < 7 && <Wire d={`M786 ${rowY(i)}H815`} />}
        </g>
      ))}

      <path d="M589 251.500H702.500V505H589z" fill={BODY} stroke={RED} strokeWidth="4" />
      {leftPins.slice(0, 8).map((n, i) => (
        <path
          key={n}
          d={`M594 ${rowY(i)}h18l5.500-9 11.500 18 11-18 11.500 18 11-18 11.500 18 6-9h18`}
          stroke={RED}
          strokeWidth="2"
        />
      ))}
      <Label x={587} y={244}>RN1</Label>
      <Label x={588} y={529}>10k</Label>

      <Label x={332} y={134}>R1</Label>
      <Label x={332} y={188}>4k7</Label>
      <Pin d="M308 153H335" />
      <Wire d="M421 153H451M475 153H504M590 153H619" />
      <Wire green d="M451 153H475M619 153H659.500V194" />
      <path d="M336 141H420V164H336z" fill={BODY} stroke={RED} strokeWidth="4" />
      <Switch x={513} y={153} />
      <Ground x={660} y={194.5} />

      <Label x={601} y={574}>SW2</Label>
      <Label x={784} y={600}>R2</Label>
      <Label x={785} y={654}>1k</Label>
      <Wire d="M573 618H602M690 618H719M757 618H787M873 618H902" />
      <Wire green d="M450 618H573M719 618H757M902 618H956.500V660" />
      <path d="M788 606.500H872V629H788z" fill={BODY} stroke={RED} strokeWidth="4" />
      <Switch x={612} y={618.5} />
      <Ground x={957} y={660} />

      <Pin d="M985 195V222" />
      <path d="M816 223H998.500V491H816z" fill="#3c0000" stroke="#780206" strokeWidth="4" />
      <g transform="translate(780 180) scale(.3333)" fill="#5d0000">
        {segments.map(d => (
          <path key={d} d={d} />
        ))}
      </g>
      <Label x={813} y={516}>LED1</Label>
    </g>
  </Sheet>
);

const OverviewMap = () => (
  <svg width="86" height="72" viewBox="0 0 86 72" fill="none" aria-hidden="true">
    <path d="M.5 .5h84v70H.5z" stroke="#2c2c78" />
    <path d="M27.500 16.500h10v33h-10z" stroke="#222" />
    <path d="M31.500 11.500h32v22h-32z" stroke="#5cc05a" />
    <path d="M37 14h5M43 15h3M39 18h3M39 21h3M39 24h3M39 27h3M37 31h6M47 31h4M52 32h5" stroke="#111" strokeWidth="2" />
    <path d="M44 17h4v11h-4zM51 17h5v11h-5z" fill="#111" />
    <path d="M49 20v6M53 19v2M53 23v3" stroke="#dcdccb" />
  </svg>
);

export default function App() {
  return (
    <Desktop>
      <Global />
      <AppWindow>
        <TitleBar>
          <Glyph name="app" size={12} />
          <TitleText>displaySw - Proteus 8 Professional - Schematic Capture</TitleText>
          <WindowControls>
            <ControlButton aria-label="Minimise"><Glyph name="minimise" size={12} /></ControlButton>
            <ControlButton aria-label="Restore"><Glyph name="restore" size={12} /></ControlButton>
            <ControlButton aria-label="Close" $close><Glyph name="closeWindow" size={12} /></ControlButton>
          </WindowControls>
        </TitleBar>

        <MenuBar>
          {menus.map(m => (
            <MenuItem key={m}>{m}</MenuItem>
          ))}
        </MenuBar>

        <Toolbars>
          <Tools names={fileTools} width={281} />
          <ToolGroup $width={119}>
            <Grip />
            <DesignSelect aria-label="Design variant">
              <option>Base Design</option>
            </DesignSelect>
          </ToolGroup>
          <Tools names={viewTools} width={171} />
          <Tools names={editTools} width={270} />
          <Tools names={designTools} width={159} />
        </Toolbars>

        <TabStrip>
          <Tab>
            <TabLabel><Glyph name="home" />Home Page</TabLabel>
            <TabClose aria-label="Close Home Page"><Glyph name="close" /></TabClose>
          </Tab>
          <Tab $active>
            <TabLabel><Glyph name="schematic" />Schematic Capture</TabLabel>
            <TabClose aria-label="Close Schematic Capture"><Glyph name="close" /></TabClose>
          </Tab>
        </TabStrip>

        <WorkArea>
          <ModeRail>
            <RailGroup $height={403}>
              <Grip $across />
              {modes.map((n, i) =>
                n === SEP ? (
                  <RailDivider key={i} />
                ) : (
                  <RailButton key={i} aria-label={n} $active={active.includes(n)}>
                    <Glyph name={n} />
                  </RailButton>
                ),
              )}
            </RailGroup>
            <RailGroup $height={105}>
              <Grip $across />
              <RailButton aria-label="Rotate clockwise"><Glyph name="rotateCw" /></RailButton>
              <RailButton aria-label="Rotate anticlockwise"><Glyph name="rotateCcw" /></RailButton>
              <AngleInput aria-label="Angle" defaultValue="0°" />
              <RailDivider />
              <RailButton aria-label="Mirror horizontally"><Glyph name="mirrorX" /></RailButton>
              <RailButton aria-label="Mirror vertically"><Glyph name="mirrorY" /></RailButton>
            </RailGroup>
          </ModeRail>

          <SidePanels>
            <Overview><OverviewMap /></Overview>
            <Picker>
              <PickerHeader>
                <PickButton>P</PickButton>
                <span>TERMINALS</span>
              </PickerHeader>
              <ul>
                {terminals.map(t => (
                  <li key={t}>
                    <PickerRow $selected={t === 'POWER'}>{t}</PickerRow>
                  </li>
                ))}
              </ul>
            </Picker>
          </SidePanels>

          <CanvasFrame>
            <Schematic />
          </CanvasFrame>
        </WorkArea>

        <StatusBar>
          <StatusGroup $width={217}>
            <Grip />
            <SimButton aria-label="Run"><Glyph name="play" /></SimButton>
            <SimButton aria-label="Step"><Glyph name="step" /></SimButton>
            <SimButton aria-label="Pause"><Glyph name="pause" /></SimButton>
            <SimButton aria-label="Stop"><Glyph name="stop" /></SimButton>
            <Divider />
            <Glyph name="info" />
            <Muted>No Messages</Muted>
          </StatusGroup>
          <StatusGroup>
            <Grip />
            <SheetName>Root sheet 1</SheetName>
          </StatusGroup>
          <StatusGroup $width={217}>
            <Grip />
            <CoordName>x:</CoordName>
            <Coord $width={45}>-850.0</Coord>
            <CoordName>y:</CoordName>
            <Coord $width={46}>+2250.0</Coord>
            <Units>th</Units>
          </StatusGroup>
        </StatusBar>
      </AppWindow>
    </Desktop>
  );
}
